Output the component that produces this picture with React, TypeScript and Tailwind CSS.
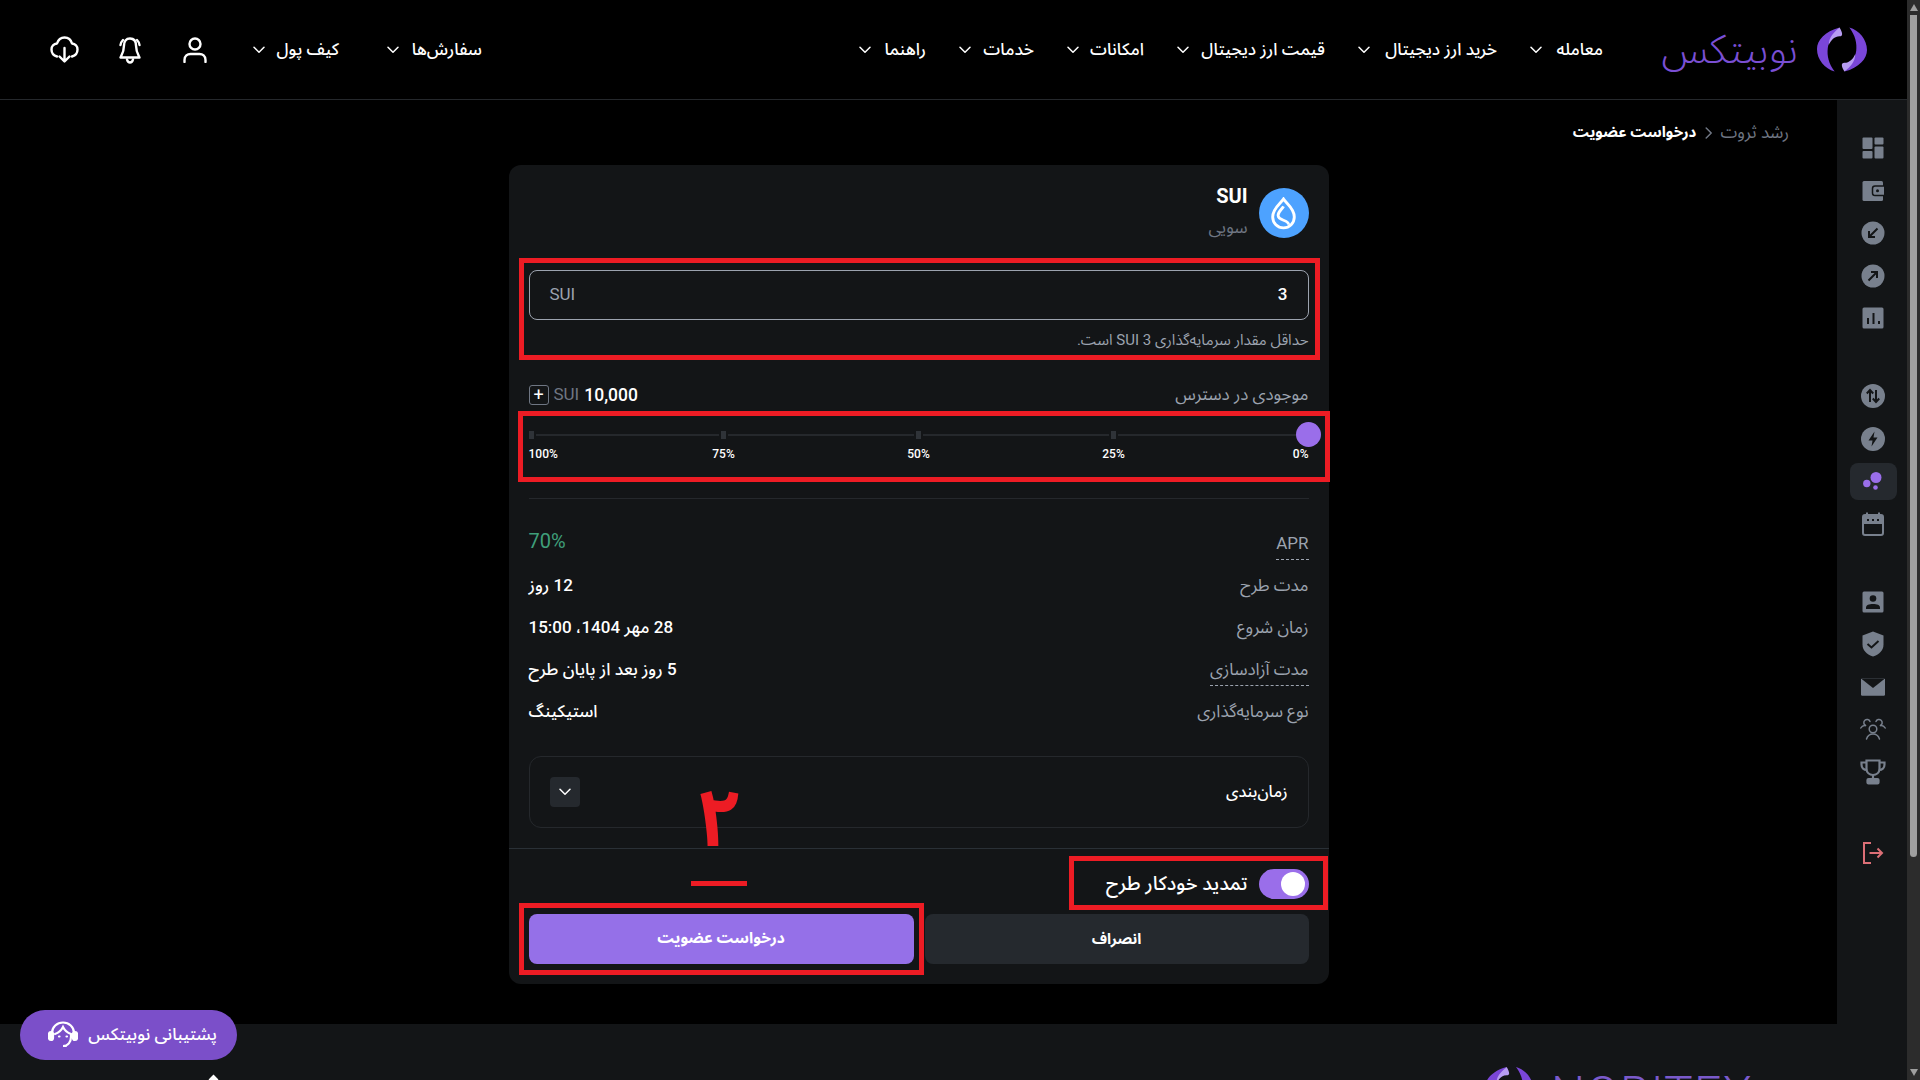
const navRight = [
  { label: "معامله", w: "w-[49px]" },
  { label: "خرید ارز دیجیتال", w: "w-[115px]" },
  { label: "قیمت ارز دیجیتال", w: "w-[124px]" },
  { label: "امکانات", w: "w-[53px]" },
  { label: "خدمات", w: "w-[51px]" },
  { label: "راهنما", w: "w-[43px]" },
];

const rows = [
  { label: "APR", value: "70%", dashed: true, green: true },
  { label: "مدت طرح", value: "12 روز" },
  { label: "زمان شروع", value: "28 مهر 1404، 15:00" },
  { label: "مدت آزادسازی", value: "5 روز بعد از پایان طرح", dashed: true },
  { label: "نوع سرمایه‌گذاری", value: "استیکینگ" },
];

const ticks = ["0%", "25%", "50%", "75%", "100%"];

function Chevron({ className = "" }: { className?: string }) {
  return (
    <svg width="12" height="8" viewBox="0 0 12 8" fill="none" className={className}>
      <path d="M1 1.2l5 5 5-5" stroke="currentColor" strokeWidth="1.5" strokeLinecap="round" strokeLinejoin="round" />
    </svg>
  );
}

function Crescents({ className = "" }: { className?: string }) {
  const outer = "M23 1C8 5 0 14 0 23c0 11 8 20 18 23-6-8-8-16-7-24C12 14 18 8 23 1z";
  const hook = "M23 1c3 5 4 9 0 9-5 0-9 4-11 9 0-8 5-13 11-18z";
  return (
    <svg viewBox="0 0 51 47" className={className}>
      <path d={outer} fill="#7a46d8" />
      <path d={hook} fill="#b79cf2" />
      <g transform="rotate(180 25.5 23.5)">
        <path d={outer} fill="#7a46d8" />
        <path d={hook} fill="#b79cf2" />
      </g>
    </svg>
  );
}

function SideIcon({ name }: { name: string }) {
  const gray = "#78808d";
  const dark = "#131517";
  switch (name) {
    case "dashboard":
      return (
        <svg width="22" height="22" viewBox="0 0 22 22" fill={gray}>
          <rect x="0.5" y="0.5" width="10" height="11.5" rx="1" />
          <rect x="0.5" y="14" width="10" height="7.5" rx="1" />
          <rect x="12.5" y="0.5" width="9" height="7" rx="1" />
          <rect x="12.5" y="9.5" width="9" height="12" rx="1" />
        </svg>
      );
    case "wallet":
      return (
        <svg width="22" height="22" viewBox="0 0 22 22">
          <rect x="0.5" y="1" width="20.5" height="20" rx="1.5" fill={gray} />
          <path d="M22 6h-9a2.5 2.5 0 0 0-2.5 2.5V13a2.5 2.5 0 0 0 2.5 2.5h9" fill={gray} stroke={dark} strokeWidth="1.5" />
          <circle cx="15.5" cy="10.8" r="1.5" fill={dark} />
        </svg>
      );
    case "in":
    case "out":
      return (
        <svg width="24" height="24" viewBox="0 0 24 24">
          <circle cx="12" cy="12" r="11.5" fill={gray} />
          <path
            d={name === "in" ? "M16.5 7.5L8 16M8 10v6h6" : "M7.5 16.5L16 8M10 8h6v6"}
            fill="none"
            stroke={dark}
            strokeWidth="2"
          />
        </svg>
      );
    case "chart":
      return (
        <svg width="22" height="22" viewBox="0 0 22 22">
          <rect x="0.5" y="0.5" width="21" height="21" rx="1.5" fill={gray} />
          <path d="M6 11v6M11.5 6v11M17 14v3" stroke={dark} strokeWidth="2" />
        </svg>
      );
    case "swap":
      return (
        <svg width="24" height="24" viewBox="0 0 24 24">
          <circle cx="12" cy="12" r="12" fill={gray} />
          <path d="M9 18V6.500M5.800 9.500L9 6l3.200 3.500M15 6v11.500M11.800 14.500L15 18l3.200-3.500" fill="none" stroke={dark} strokeWidth="2" />
        </svg>
      );
    case "bolt":
      return (
        <svg width="24" height="24" viewBox="0 0 24 24">
          <circle cx="12" cy="12" r="12" fill={gray} />
          <path d="M13.5 4.5L7.5 13.5h4l-1 6 6-9h-4z" fill={dark} />
        </svg>
      );
    case "bubbles":
      return (
        <svg width="20" height="20" viewBox="0 0 20 20" fill="#9a6eea">
          <circle cx="13" cy="6.5" r="5.5" />
          <circle cx="3.8" cy="12.5" r="3.7" />
          <circle cx="12.5" cy="16.5" r="2.3" />
        </svg>
      );
    case "calendar":
      return (
        <svg width="22" height="24" viewBox="0 0 22 24">
          <path d="M5 0.5v3M17 0.5v3" stroke={gray} strokeWidth="2" />
          <rect x="1" y="3" width="20" height="20" rx="2" fill="none" stroke={gray} strokeWidth="2" />
          <rect x="1" y="3" width="20" height="9" fill={gray} />
          <path d="M5 8h2M10 8h2M15 8h2" stroke={dark} strokeWidth="2" />
        </svg>
      );
    case "profile":
      return (
        <svg width="22" height="22" viewBox="0 0 22 22">
          <rect x="0.5" y="0.5" width="21" height="21" rx="1.5" fill={gray} />
          <circle cx="11" cy="7.5" r="3.3" fill={dark} />
          <path d="M4 18v-1.5c0-2.5 3-3.5 7-3.5s7 1 7 3.5V18z" fill={dark} />
        </svg>
      );
    case "shield":
      return (
        <svg width="22" height="26" viewBox="0 0 22 26">
          <path d="M11 0.5L21.5 4.5v9c0 6-4.5 10-10.5 12C5 23.5 0.5 19.5 0.5 13.5v-9z" fill={gray} />
          <path d="M5.5 13l4 3.5 7-6.5" fill="none" stroke={dark} strokeWidth="2" />
        </svg>
      );
    case "mail":
      return (
        <svg width="24" height="18" viewBox="0 0 24 18">
          <rect x="0.5" y="0.5" width="23" height="17" fill={gray} />
          <path d="M0 0.5L12 10 24 0.5" fill={dark} />
          <path d="M0.5 1v16h23V1" fill="none" stroke={gray} />
        </svg>
      );
    case "people":
      return (
        <svg width="26" height="22" viewBox="0 0 26 22" fill="none" stroke={gray} strokeWidth="1.5" strokeLinecap="round">
          <circle cx="13" cy="11" r="3.8" />
          <path d="M6.5 21c1-3 3.5-5 6.5-5s5.5 2 6.5 5" />
          <path d="M5.5 7.5a3.2 3.2 0 1 1 4.5-4" />
          <path d="M20.5 7.5a3.2 3.2 0 1 0-4.5-4" />
          <path d="M0.8 10c1-1.8 2.6-2.7 4.7-2.5" />
          <path d="M25.2 10c-1-1.8-2.6-2.7-4.7-2.5" />
        </svg>
      );
    case "trophy":
      return (
        <svg width="26" height="26" viewBox="0 0 26 26" fill="none" stroke={gray} strokeWidth="2.2">
          <path d="M6.5 1.5h13v8c0 4-3 6.5-6.5 6.5s-6.5-2.5-6.5-6.5z" />
          <path d="M6.5 3.5H1.5v2c0 3 2 5.5 5.5 5.5M19.5 3.5h5v2c0 3-2 5.5-5.5 5.5" />
          <path d="M13 16v3" />
          <rect x="7.5" y="20" width="11" height="4.5" rx="1" fill={gray} />
        </svg>
      );
    default:
      return (
        <svg width="22" height="22" viewBox="0 0 22 22" fill="none" stroke="#dc6f76" strokeWidth="2">
          <path d="M9 1H2v20h7" />
          <path d="M7.5 11H20M15.5 6.5L20 11l-4.5 4.5" />
        </svg>
      );
  }
}

const sideGroups = [
  ["dashboard", "wallet", "in", "out", "chart"],
  ["swap", "bolt", "bubbles", "calendar"],
  ["profile", "shield", "mail", "people", "trophy"],
];

function Sidebar() {
  return (
    <aside className="w-[70px] shrink-0 bg-[#131517] pt-[27px] pl-[2px] flex flex-col items-center gap-[35.5px]">
      {sideGroups.map((group) => (
        <div key={group[0]} className="flex flex-col w-full items-center">
          {group.map((name) => (
            <div key={name} className="h-[42.5px] w-full flex items-center justify-center">
              {name === "bubbles" ? (
                <div className="w-[47px] h-[37px] rounded-lg bg-[#25292e] flex items-center justify-center">
                  <SideIcon name={name} />
                </div>
              ) : (
                <SideIcon name={name} />
              )}
            </div>
          ))}
        </div>
      ))}
      <div className="h-[42.5px] flex items-center justify-center mt-[3px]">
        <SideIcon name="logout" />
      </div>
    </aside>
  );
}

function Header() {
  return (
    <header className="h-[100px] shrink-0 border-b border-[#25282c] flex items-center pr-[40px] pl-[50px]">
      <Crescents className="w-[50px] h-[47px] shrink-0" />
      <span className="w-[137px] mr-[19px] text-[#7a4fd4] text-[40px] font-light leading-none whitespace-nowrap">نوبیتکس</span>
      <nav className="flex items-center gap-[33px] mr-[58px]">
        {navRight.map((item) => (
          <div key={item.label} className="flex items-center gap-[12px] text-white text-[17px] font-medium">
            <span className={`${item.w} whitespace-nowrap`}>{item.label}</span>
            <Chevron />
          </div>
        ))}
      </nav>
      <div className="mr-auto flex items-center">
        <div className="flex items-center gap-[48px] ml-[46px] text-white text-[17px] font-medium">
          <div className="flex items-center gap-[12px]">
            <span className="w-[71px] whitespace-nowrap">سفارش‌ها</span>
            <Chevron />
          </div>
          <div className="flex items-center gap-[12px]">
            <span className="w-[62px] whitespace-nowrap">کیف پول</span>
            <Chevron />
          </div>
        </div>
        <div className="flex items-center gap-[37px]">
          <svg width="24" height="26" viewBox="0 0 24 26" fill="none" stroke="#fff" strokeWidth="2.4" strokeLinecap="round" className="ml-[2px]">
            <circle cx="12" cy="7" r="5.5" />
            <path d="M1.5 25v-2c0-4 3-6 6-6h9c3 0 6 2 6 6v2" />
          </svg>
          <svg width="28" height="28" viewBox="0 0 28 28" fill="none" stroke="#fff" strokeWidth="2.4" strokeLinecap="round" strokeLinejoin="round">
            <path d="M14 2.5c-4 0-6 3-6 7 0 6-2 9-3.5 12h19C22 18.5 20 15.5 20 9.5c0-4-2-7-6-7z" />
            <path d="M11 23.5c.5 2 1.5 3 3 3s2.5-1 3-3" />
            <path d="M4.5 9c.2-2 1-3.5 2.5-5M23.5 9c-.2-2-1-3.5-2.5-5" />
          </svg>
          <svg width="29" height="27" viewBox="0 0 29 27" fill="none" stroke="#fff" strokeWidth="2.4" strokeLinecap="round" strokeLinejoin="round">
            <path d="M7 20.5C3.5 19.5 1.5 17 1.5 13.5c0-3.2 2.3-5.7 5.5-6C8.200 3.800 11 1.5 14.5 1.5s6.5 2.300 7.500 6c3.200.3 5.500 2.800 5.500 6 0 3.500-2 6-5.500 7" />
            <path d="M14.5 12v13M9.5 20.5l5 5 5-5" />
          </svg>
        </div>
      </div>
    </header>
  );
}

function Card() {
  return (
    <div className="relative w-[820px] mx-auto bg-[#131517] rounded-xl pt-[23px] pb-5">
      <div className="px-5">
        <div className="flex items-center gap-[11px] h-[50px]">
          <div className="w-[50px] h-[50px] rounded-full bg-[#4da2ff] flex items-center justify-center">
            <svg width="27" height="33" viewBox="0 0 30 36" fill="none" stroke="#fff" strokeWidth="3.2">
              <path d="M15 2c3 5 12 10 12 20a12 12 0 0 1-24 0C3 12 12 7 15 2z" />
              <path d="M15 10c-1.5 3-6 6-6 10 0 3 3 4.5 6 5.5s6 2.5 5.5 5" />
            </svg>
          </div>
          <div className="flex flex-col">
            <span className="text-white text-[20px] font-bold leading-[24px] -mt-[3px]">SUI</span>
            <span className="text-[#6f7683] text-[17px] leading-[24px] mt-[7px]">سویی</span>
          </div>
        </div>

        <div className="mt-[32px] h-[50px] border border-[#9ca3af] rounded-lg flex items-center justify-between px-[20px]">
          <span className="text-white text-[17px] font-medium">3</span>
          <span className="text-[#9ca3af] text-[17px]">SUI</span>
        </div>
        <p className="mt-[10px] text-[#9ca3af] text-[15px] leading-[20px]">حداقل مقدار سرمایه‌گذاری 3 {"\u200f"}SUI است.</p>

        <div className="mt-[35px] h-[20px] flex items-center justify-between">
          <span className="text-[#9ca3af] text-[17px]">موجودی در دسترس</span>
          <div className="flex items-center gap-[5px]">
            <span className="text-white text-[17.5px] font-medium">10,000</span>
            <span className="text-[#6f7683] text-[17px]">SUI</span>
            <span className="w-[20px] h-[20px] border border-[#6f7683] rounded-[3px] flex items-center justify-center text-white text-[18px] leading-none">+</span>
          </div>
        </div>

        <div className="mt-[17px] relative h-[25px] flex items-center justify-between">
          <div className="absolute inset-x-0 top-[12px] h-[2px] bg-[#25282c]" />
          {ticks.map((t, i) => (
            <div key={t} className={`relative w-0 h-[25px] flex items-center justify-center ${i === 4 ? "translate-x-[3px]" : ""}`}>
              {i === 0 ? (
                <div className="shrink-0 w-[25px] h-[25px] rounded-full bg-[#9a6eea]" />
              ) : (
                <div className="shrink-0 w-[5px] h-[8px] bg-[#2f3338] shadow-[0_0_0_2px_#131517]" />
              )}
            </div>
          ))}
        </div>
        <div className="flex justify-between text-white text-[12px] font-medium leading-[14px]">
          {ticks.map((t, i) => (
            <div key={t} className={`w-0 flex ${i === 0 ? "justify-start" : i === 4 ? "justify-end" : "justify-center"}`}>
              <span dir="ltr" className="shrink-0">{t}</span>
            </div>
          ))}
        </div>

        <div className="mt-[37px] h-px bg-[#25282c]" />

        <div className="mt-[32px]">
          {rows.map((row) => (
            <div key={row.label} className="h-[42px] flex items-start justify-between text-[17px] leading-6">
              <span className={row.dashed ? "text-[#9ca3af] pb-[4px] border-b border-dashed border-[#9ca3af]" : "text-[#9ca3af]"}>{row.label}</span>
              <span className={row.green ? "text-[#3f9f7a] text-[20px] -mt-[2px]" : "text-white font-medium"}>{row.value}</span>
            </div>
          ))}
        </div>

        <div className="mt-[15px] h-[72px] border border-[#25282c] rounded-xl flex items-center justify-between px-[20px]">
          <span className="text-white text-[16px] font-medium">زمان‌بندی</span>
          <div className="w-[30px] h-[30px] rounded bg-[#25292e] flex items-center justify-center text-white">
            <Chevron />
          </div>
        </div>
      </div>

      <div className="mt-[20px] h-px bg-[#2a3036]" />

      <div className="px-5">
        <div className="mt-[20px] h-[30px] flex items-center gap-[11px]">
          <div className="w-[50px] h-[30px] rounded-full bg-[#9a6eea] flex items-center pr-[4px]">
            <div className="w-[24px] h-[24px] rounded-full bg-white" />
          </div>
          <span className="text-white text-[19.5px] font-medium">تمدید خودکار طرح</span>
        </div>
        <div className="mt-[15px] flex gap-[11px]">
          <button className="flex-1 h-[50px] rounded-lg bg-[#25292e] text-white text-[15px] font-bold">انصراف</button>
          <button className="w-[385px] h-[50px] rounded-lg bg-[#9570e8] text-white text-[15.5px] font-bold">درخواست عضویت</button>
        </div>
      </div>

      {/* red annotations sitting on top of the screenshot */}
      <div className="absolute left-[10px] top-[93px] w-[801px] h-[102px] border-[5px] border-[#ed1c24] pointer-events-none" />
      <div className="absolute left-[9px] top-[246px] w-[812px] h-[71px] border-[5px] border-[#ed1c24] pointer-events-none" />
      <div className="absolute left-[560px] top-[691px] w-[259px] h-[54px] border-[5px] border-[#ed1c24] pointer-events-none" />
      <div className="absolute left-[10px] top-[738px] w-[405px] h-[72px] border-[5px] border-[#ed1c24] pointer-events-none" />
      <div className="absolute left-[182px] top-[716px] w-[56px] h-[5px] bg-[#ed1c24]" />
      <span className="absolute left-[188px] top-[609px] text-[#ed1c24] text-[80px] leading-[90px] font-bold">۲</span>
    </div>
  );
}

export default function App() {
  return (
    <div className="h-[1080px] overflow-hidden flex bg-black font-[Roboto,'Noto_Sans_Arabic','DejaVu_Sans',sans-serif]">
      <div dir="rtl" className="w-[1907px] shrink-0 flex flex-col relative">
        <Header />
        <div className="flex flex-1 min-h-0">
          <Sidebar />
          <div className="flex-1 min-w-0 flex flex-col">
            <main className="h-[924px] shrink-0 overflow-hidden">
              <div className="h-[65px] pr-[48px] flex items-center gap-[5px] text-[16px]">
                <span className="text-[#6f7683] text-[17px]">رشد ثروت</span>
                <Chevron className="-rotate-90 text-[#6f7683] ml-[2px]" />
                <span className="text-white font-bold text-[15px]">درخواست عضویت</span>
              </div>
              <Card />
            </main>
            <footer className="flex-1 bg-[#131517] overflow-hidden flex items-start pt-[42px] pr-[84px] gap-[18px]">
              <span dir="ltr" className="text-[#7a5acb] text-[48px] font-light leading-[46px] tracking-wide mt-[5px]">NOBITEX</span>
              <Crescents className="w-[48px] h-[44px] shrink-0" />
            </footer>
          </div>
        </div>
        <div className="absolute left-[20px] top-[1010px] w-[217px] h-[50px] rounded-full bg-[#7b4fc9] flex items-center gap-[10px] pr-[20px] text-white text-[17px] font-medium">
          <span className="whitespace-nowrap">پشتیبانی نوبیتکس</span>
          <svg width="30" height="28" viewBox="0 0 30 28" fill="none" stroke="#fff" strokeWidth="2.2" strokeLinecap="round">
            <path d="M4 14V12C4 6 9 1.5 15 1.5S26 6 26 12v2" />
            <path d="M7 13c3-1 6-3 8-7 2 4 5 6 8 7v3c0 5-3 9-8 9h3" />
            <rect x="1" y="11" width="4" height="8" rx="2" fill="#fff" />
            <rect x="25" y="11" width="4" height="8" rx="2" fill="#fff" />
            <path d="M11 15.5h.5M18.5 15.5h.5" />
          </svg>
        </div>
        <div className="absolute left-[210px] top-[1076px] w-[7px] h-[7px] rotate-45 bg-white" />
      </div>
      <div className="flex-1 bg-[#2c2c2c] flex flex-col items-center">
        <div className="mt-[4px] w-0 h-0 border-x-[4.5px] border-x-transparent border-b-[7px] border-b-[#9f9f9f]" />
        <div className="mt-[4px] w-[7px] h-[842px] rounded-b-full bg-[#9f9f9f]" />
        <div className="mt-auto mb-[4px] w-0 h-0 border-x-[4.5px] border-x-transparent border-t-[7px] border-t-[#9f9f9f]" />
      </div>
    </div>
  );
}
